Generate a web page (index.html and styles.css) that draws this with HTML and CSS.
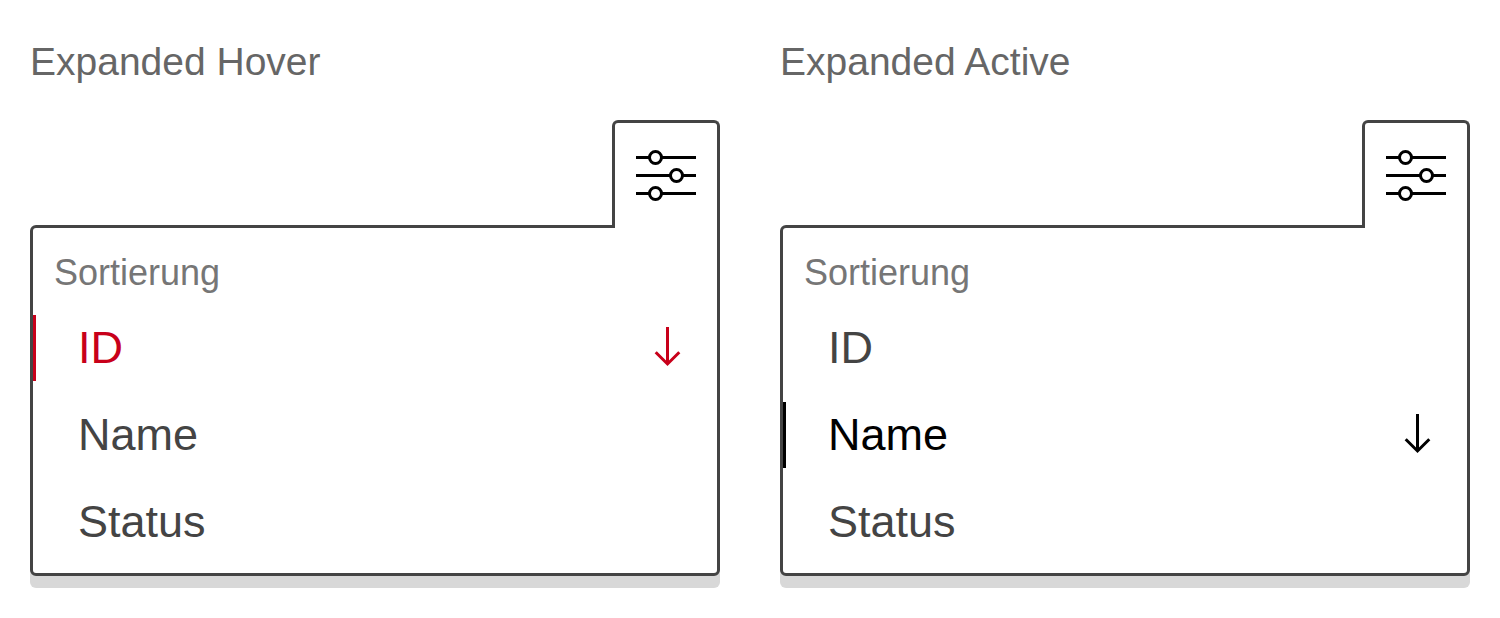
FILE: index.html
```html
<!DOCTYPE html>
<html lang="de">
<head>
<meta charset="utf-8">
<meta name="viewport" content="width=device-width, initial-scale=1">
<title>Sortierung</title>
<link rel="stylesheet" href="styles.css">
</head>
<body>
<main class="states">
  <section class="state">
    <h2 class="state-title">Expanded Hover</h2>
    <div class="sorter">
      <button class="sorter-toggle" type="button" aria-expanded="true" aria-label="Sortierung anzeigen">
        <svg class="sliders" viewBox="0 0 60 51" aria-hidden="true">
          <path d="M0 7.5H60M0 25.5H60M0 43.5H60"/>
          <circle cx="19.5" cy="7.5" r="6"/><circle cx="40.5" cy="25.5" r="6"/><circle cx="19.5" cy="43.5" r="6"/>
        </svg>
      </button>
      <div class="sorter-panel">
        <h3 class="sorter-label">Sortierung</h3>
        <ul class="options">
          <li><button class="option option-hover" type="button">ID
            <svg class="arrow" viewBox="0 0 27 42" aria-hidden="true"><path d="M13.5 0V37M1.7 25.2L13.5 37L25.3 25.2"/></svg>
          </button></li>
          <li><button class="option" type="button">Name</button></li>
          <li><button class="option" type="button">Status</button></li>
        </ul>
      </div>
    </div>
  </section>
  <section class="state">
    <h2 class="state-title">Expanded Active</h2>
    <div class="sorter">
      <button class="sorter-toggle" type="button" aria-expanded="true" aria-label="Sortierung anzeigen">
        <svg class="sliders" viewBox="0 0 60 51" aria-hidden="true">
          <path d="M0 7.5H60M0 25.5H60M0 43.5H60"/>
          <circle cx="19.5" cy="7.5" r="6"/><circle cx="40.5" cy="25.5" r="6"/><circle cx="19.5" cy="43.5" r="6"/>
        </svg>
      </button>
      <div class="sorter-panel">
        <h3 class="sorter-label">Sortierung</h3>
        <ul class="options">
          <li><button class="option" type="button">ID</button></li>
          <li><button class="option option-active" type="button">Name
            <svg class="arrow" viewBox="0 0 27 42" aria-hidden="true"><path d="M13.5 0V37M1.7 25.2L13.5 37L25.3 25.2"/></svg>
          </button></li>
          <li><button class="option" type="button">Status</button></li>
        </ul>
      </div>
    </div>
  </section>
</main>
</body>
</html>
```
FILE: styles.css
```css
* {
  box-sizing: border-box;
}

body {
  margin: 0;
  background: #fff;
  color: #444;
  font-family: "Helvetica Neue", Helvetica, "Liberation Sans", Arial, sans-serif;
}

button {
  font: inherit;
  color: inherit;
  cursor: pointer;
}

.states {
  display: grid;
  grid-template-columns: 1fr 1fr;
  gap: 60px;
  padding: 39px 30px 30px;
}

.state-title {
  margin: 0 0 36px;
  color: #666;
  font-size: 39px;
  font-weight: 400;
  line-height: 45px;
}

.sorter {
  display: flex;
  flex-direction: column;
}

/* The tab covers the panel's top border so both read as one outline. */
.sorter-toggle {
  z-index: 1;
  display: flex;
  align-self: flex-end;
  margin: 0 0 -3px;
  padding: 27px 21px;
  border: 3px solid #444;
  border-bottom: 0;
  border-radius: 6px 6px 0 0;
  background: #fff;
}

.sliders {
  width: 60px;
  height: 51px;
  fill: #fff;
  stroke: #000;
  stroke-width: 3;
}

.sorter-panel {
  padding: 24px 0 18px;
  border: 3px solid #444;
  border-radius: 6px 0 6px 6px;
  background: #fff;
  box-shadow: 0 12px 0 #d8d8d8;
}

.sorter-label {
  margin: 0 0 21px;
  padding: 0 21px;
  color: #767676;
  font-size: 36px;
  font-weight: 400;
  line-height: 42px;
}

.options {
  display: grid;
  gap: 21px;
  margin: 0;
  padding: 0;
  list-style: none;
}

.option {
  display: flex;
  align-items: center;
  justify-content: space-between;
  width: 100%;
  padding: 0 36px 0 42px;
  border: 0;
  border-left: 3px solid transparent;
  background: none;
  font-size: 45px;
  line-height: 66px;
  text-align: left;
}

.option-hover {
  border-left-color: currentColor;
  color: #c8001a;
}

.option-active {
  border-left-color: currentColor;
  color: #000;
}

.arrow {
  width: 27px;
  height: 42px;
  fill: none;
  stroke: currentColor;
  stroke-width: 3;
}
```
